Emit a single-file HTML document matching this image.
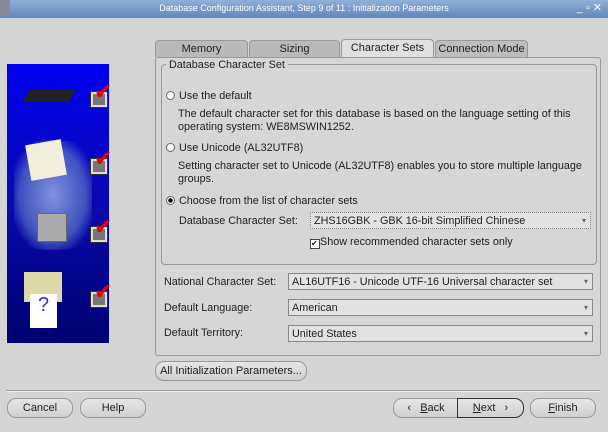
<!DOCTYPE html><html><head><style>
body{margin:0;width:608px;height:432px;background:#d4d4d4;font-family:"Liberation Sans",sans-serif;font-size:10.8px;color:#222;position:relative;overflow:hidden}
.a{position:absolute;white-space:nowrap}
.title{left:0;top:0;width:608px;height:18px;background:linear-gradient(#8fb0d8,#5f86bb);color:#fff;font-size:9px;text-align:center;line-height:17px}
.tab{position:absolute;top:40px;height:16px;border:1px solid #999;border-bottom:none;border-radius:4px 4px 0 0;background:#b9b9b9;text-align:center;line-height:17px;font-size:11px}
.box{position:absolute;border:1px solid #999;border-radius:4px}
.sel{position:absolute;height:15px;border:1px solid #888;background:#e2e2e2;line-height:16px;padding-left:3px;font-size:10.8px}
.sel:after{content:"▾";position:absolute;right:4px;top:0;font-size:8px;color:#666}
.btn{position:absolute;height:18px;border:1px solid #999;border-radius:9px;background:linear-gradient(#e6e6e6,#cfcfcf);text-align:center;line-height:19px;font-size:11px}
.rad{display:inline-block;width:7px;height:7px;border:1px solid #666;border-radius:50%;background:#fff;margin-right:4px;vertical-align:-1px}
.ck{position:absolute;width:12px;height:11px;border:2px solid #ddd;background:#777;outline:1px solid #333}
.ck:after{content:"✔";position:absolute;left:1px;top:-14px;color:#e00;font-size:22px;font-family:"DejaVu Sans",sans-serif}
</style></head><body>
<div class="a title">Database Configuration Assistant, Step 9 of 11 : Initialization Parameters<span style="position:absolute;right:6px;font-size:11px">_ ▫ ✕</span></div>
<div class="a" style="left:0;top:0;width:10px;height:16px;background:#889"></div>
<div class="a" style="left:7px;top:64px;width:102px;height:279px;background:linear-gradient(#0000f0,#0a0ab0 50%,#000070)"></div>
<div class="a" style="left:14px;top:140px;width:78px;height:110px;border-radius:40px/14px;background:radial-gradient(#8fa0e0,#4458c0 60%,transparent 80%);opacity:.9"></div>
<div class="a" style="left:26px;top:90px;width:46px;height:12px;background:#222;transform:skew(-30deg)"></div>
<div class="a" style="left:28px;top:142px;width:36px;height:36px;background:#f2eedc;transform:rotate(-10deg)"></div>
<div class="a" style="left:37px;top:213px;width:28px;height:27px;background:#aaa;border:1px solid #666"></div>
<div class="a" style="left:24px;top:272px;width:38px;height:30px;background:#ddd8a8"></div>
<div class="a" style="left:30px;top:294px;width:27px;height:34px;background:#fff;color:#33c;font-size:20px;text-align:center">?</div>
<div class="ck" style="left:91px;top:92px"></div>
<div class="ck" style="left:91px;top:159px"></div>
<div class="ck" style="left:91px;top:227px"></div>
<div class="ck" style="left:91px;top:292px"></div>
<div class="tab" style="left:155px;width:91px">Memory</div>
<div class="tab" style="left:249px;width:89px">Sizing</div>
<div class="tab" style="left:341px;width:91px;background:#e0e0e0;top:39px;height:18px">Character Sets</div>
<div class="tab" style="left:435px;width:91px;background:#bdbdbd">Connection Mode</div>
<div class="box" style="left:155px;top:57px;width:444px;height:297px;border-radius:3px;background:#d6d6d6"></div>
<div class="box" style="left:161px;top:64px;width:434px;height:199px"></div>
<div class="a" style="left:166px;top:59px;background:#d6d6d6;padding:0 3px">Database Character Set</div>
<div class="a" style="left:166px;top:90px"><span class="rad"></span>Use the default</div>
<div class="a" style="left:178px;top:108px;line-height:13px">The default character set for this database is based on the language setting of this<br>operating system: WE8MSWIN1252.</div>
<div class="a" style="left:166px;top:142px"><span class="rad"></span>Use Unicode (AL32UTF8)</div>
<div class="a" style="left:178px;top:160px;line-height:13px">Setting character set to Unicode (AL32UTF8) enables you to store multiple language<br>groups.</div>
<div class="a" style="left:166px;top:195px"><span class="rad" style="background:radial-gradient(#000 40%,#fff 50%)"></span>Choose from the list of character sets</div>
<div class="a" style="left:179px;top:215px">Database Character Set:</div>
<div class="sel" style="left:310px;top:212px;width:276px;border-style:dotted">ZHS16GBK - GBK 16-bit Simplified Chinese</div>
<div class="a" style="left:310px;top:236px"><span style="display:inline-block;width:8px;height:8px;border:1px solid #444;background:#fff;font-size:8px;line-height:8px;vertical-align:-1px;font-family:'DejaVu Sans'">✔</span>Show recommended character sets only</div>
<div class="a" style="left:164px;top:276px">National Character Set:</div>
<div class="sel" style="left:288px;top:273px;width:300px">AL16UTF16 - Unicode UTF-16 Universal character set</div>
<div class="a" style="left:164px;top:302px">Default Language:</div>
<div class="sel" style="left:288px;top:299px;width:300px">American</div>
<div class="a" style="left:164px;top:327px">Default Territory:</div>
<div class="sel" style="left:288px;top:325px;width:300px">United States</div>
<div class="btn" style="left:155px;top:361px;width:150px">All Initialization Parameters...</div>
<div class="a" style="left:6px;top:390px;width:594px;height:1px;background:#999;border-bottom:1px solid #eee"></div>
<div class="btn" style="left:7px;top:398px;width:64px">Cancel</div>
<div class="btn" style="left:80px;top:398px;width:64px">Help</div>
<div class="btn" style="left:393px;top:398px;width:64px;border-radius:9px 0 0 9px">&lsaquo;&nbsp;&nbsp;&nbsp;<u>B</u>ack</div>
<div class="btn" style="left:457px;top:398px;width:65px;border:1px solid #333;border-radius:0 9px 9px 0"><u>N</u>ext&nbsp;&nbsp;&nbsp;&rsaquo;</div>
<div class="btn" style="left:530px;top:398px;width:64px"><u>F</u>inish</div>
</body></html>
